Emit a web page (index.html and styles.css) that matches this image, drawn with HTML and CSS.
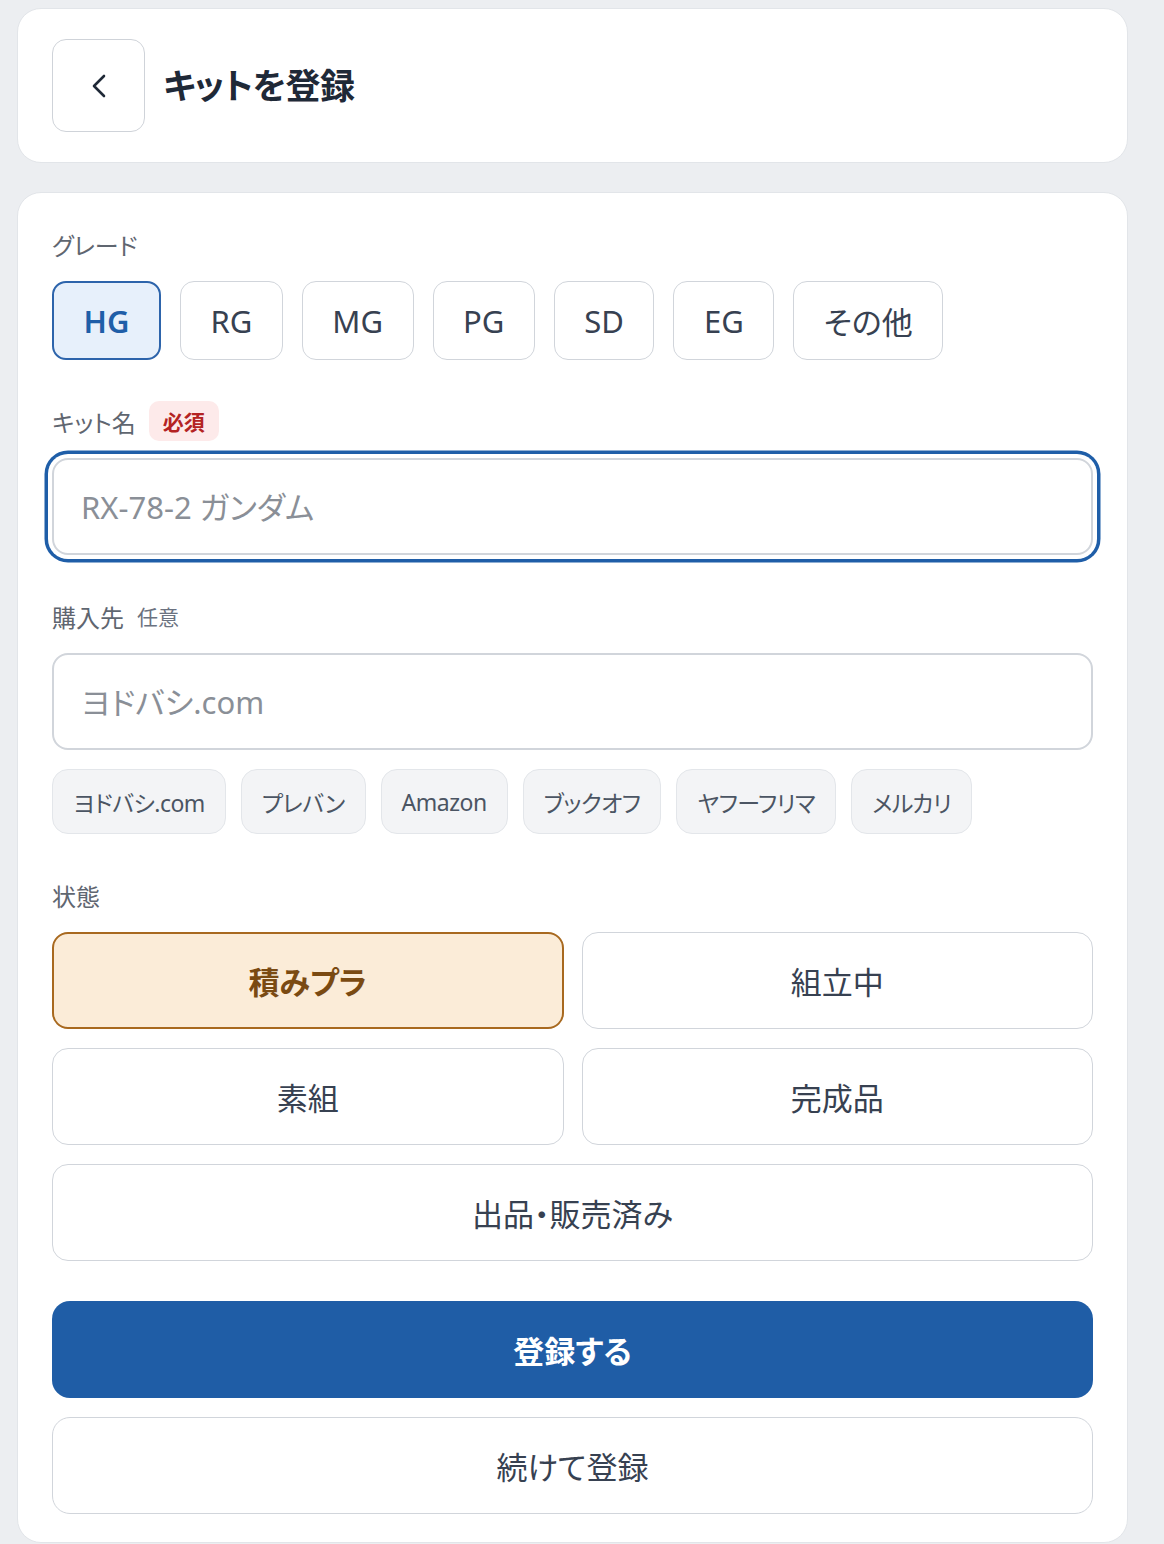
FILE: index.html
```html
<!DOCTYPE html>
<html lang="ja">
<head>
    <meta charset="UTF-8">
    <meta name="viewport" content="width=device-width, initial-scale=1.0">
    <title>キットを登録</title>
    <link rel="stylesheet" href="styles.css">
</head>
<body>
    <div class="card header">
        <button class="back-btn" aria-label="戻る">
            <svg width="32" height="32" viewBox="0 0 32 32" fill="none" stroke="#1f2937" stroke-width="2.6" stroke-linecap="round" stroke-linejoin="round">
                <polyline points="21 6 11 16 21 26"></polyline>
            </svg>
        </button>
        <h1 class="title">キットを登録</h1>
    </div>

    <div class="card form">
        <div class="field">
            <div class="label">グレード</div>
            <div class="grades">
                <button class="grade active">HG</button>
                <button class="grade">RG</button>
                <button class="grade">MG</button>
                <button class="grade">PG</button>
                <button class="grade">SD</button>
                <button class="grade">EG</button>
                <button class="grade">その他</button>
            </div>
        </div>

        <div class="field">
            <div class="label">キット名 <span class="badge-required">必須</span></div>
            <input type="text" class="text-input focused" placeholder="RX-78-2 ガンダム" autofocus>
        </div>

        <div class="field">
            <div class="label">購入先 <span class="optional">任意</span></div>
            <input type="text" class="text-input" placeholder="ヨドバシ.com">
            <div class="chips">
                <button class="chip">ヨドバシ.com</button>
                <button class="chip">プレバン</button>
                <button class="chip">Amazon</button>
                <button class="chip">ブックオフ</button>
                <button class="chip">ヤフーフリマ</button>
                <button class="chip">メルカリ</button>
            </div>
        </div>

        <div class="field field-last">
            <div class="label">状態</div>
            <div class="status-grid">
                <button class="status selected">積みプラ</button>
                <button class="status">組立中</button>
                <button class="status">素組</button>
                <button class="status">完成品</button>
                <button class="status wide">出品・販売済み</button>
            </div>
        </div>

        <div class="actions">
            <button class="btn-primary">登録する</button>
            <button class="btn-secondary">続けて登録</button>
        </div>
    </div>
</body>
</html>
```

FILE: styles.css
```css
* {
    box-sizing: border-box;
}

body {
    font-family: 'Noto Sans', 'Noto Sans CJK JP', sans-serif;
    font-feature-settings: "palt";
    background: #eceef1;
    margin: 0;
    padding: 8px 36px 0 17px;
    color: #374151;
}

button, input {
    font-family: inherit;
    font-feature-settings: "palt";
}

.card {
    background: #ffffff;
    border: 1px solid #e2e5e9;
    border-radius: 24px;
}

.header {
    display: flex;
    align-items: center;
    gap: 18px;
    padding: 30px 34px;
    margin-bottom: 29px;
}

.back-btn {
    width: 93px;
    height: 93px;
    border: 1.5px solid #cfd3d9;
    border-radius: 14px;
    background: #fff;
    display: flex;
    justify-content: center;
    align-items: center;
    padding: 0;
}

.title {
    margin: 0 0 4px;
    font-size: 35px;
    font-weight: 700;
    color: #1f2937;
    letter-spacing: -0.5px;
}

.form {
    padding: 31px 34px 28px;
}

.field {
    margin-bottom: 41px;
}

.field-last {
    margin-bottom: 40px;
}

.label {
    display: flex;
    align-items: center;
    gap: 13px;
    height: 40px;
    margin-bottom: 17px;
    font-size: 24px;
    color: #5f6670;
}

.badge-required {
    display: inline-flex;
    align-items: center;
    height: 40px;
    padding: 0 14px;
    border-radius: 10px;
    background: #fdeaea;
    color: #b42323;
    font-size: 21px;
    font-weight: 700;
}

.optional {
    font-size: 21px;
    color: #6b7280;
}

.grades {
    display: flex;
    flex-wrap: wrap;
    gap: 19px;
}

.grade {
    height: 79px;
    padding: 0 29.5px;
    border: 1.5px solid #d1d5db;
    border-radius: 14px;
    background: #fff;
    font-size: 31px;
    color: #374151;
}

.grade.active {
    background: #e7f0fb;
    border: 2px solid #2d64ab;
    color: #1f5ea8;
    font-weight: 600;
}

.text-input {
    display: block;
    width: 100%;
    height: 97px;
    padding: 0 27px;
    border: 2px solid #d1d5db;
    border-radius: 16px;
    font-size: 31px;
    color: #1f2937;
    outline: none;
}

.text-input::placeholder {
    color: #8a8f97;
}

.text-input.focused {
    box-shadow: 0 0 0 4px #fff, 0 0 0 7.5px #1f5ea8;
}

.chips {
    display: flex;
    flex-wrap: wrap;
    gap: 15px;
    margin-top: 19px;
}

.chip {
    height: 65px;
    padding: 0 20px;
    border: 1.5px solid #e3e6ea;
    border-radius: 16px;
    background: #f3f4f6;
    font-size: 23px;
    letter-spacing: -0.5px;
    color: #4b5563;
}

.status-grid {
    display: grid;
    grid-template-columns: 1fr 1fr;
    gap: 19px 18px;
}

.status {
    height: 97px;
    border: 1.5px solid #d1d5db;
    border-radius: 16px;
    background: #fff;
    font-size: 31px;
    color: #374151;
}

.status.wide {
    grid-column: 1 / 3;
}

.status.selected {
    background: #fbecd8;
    border: 2px solid #a8691f;
    color: #7a4a12;
    font-weight: 700;
}

.actions {
    display: flex;
    flex-direction: column;
    gap: 19px;
}

.btn-primary {
    height: 97px;
    border: none;
    border-radius: 18px;
    background: #1f5da6;
    color: #fff;
    font-size: 31px;
    font-weight: 700;
}

.btn-secondary {
    height: 97px;
    border: 1.5px solid #d1d5db;
    border-radius: 18px;
    background: #fff;
    color: #374151;
    font-size: 31px;
}
```
